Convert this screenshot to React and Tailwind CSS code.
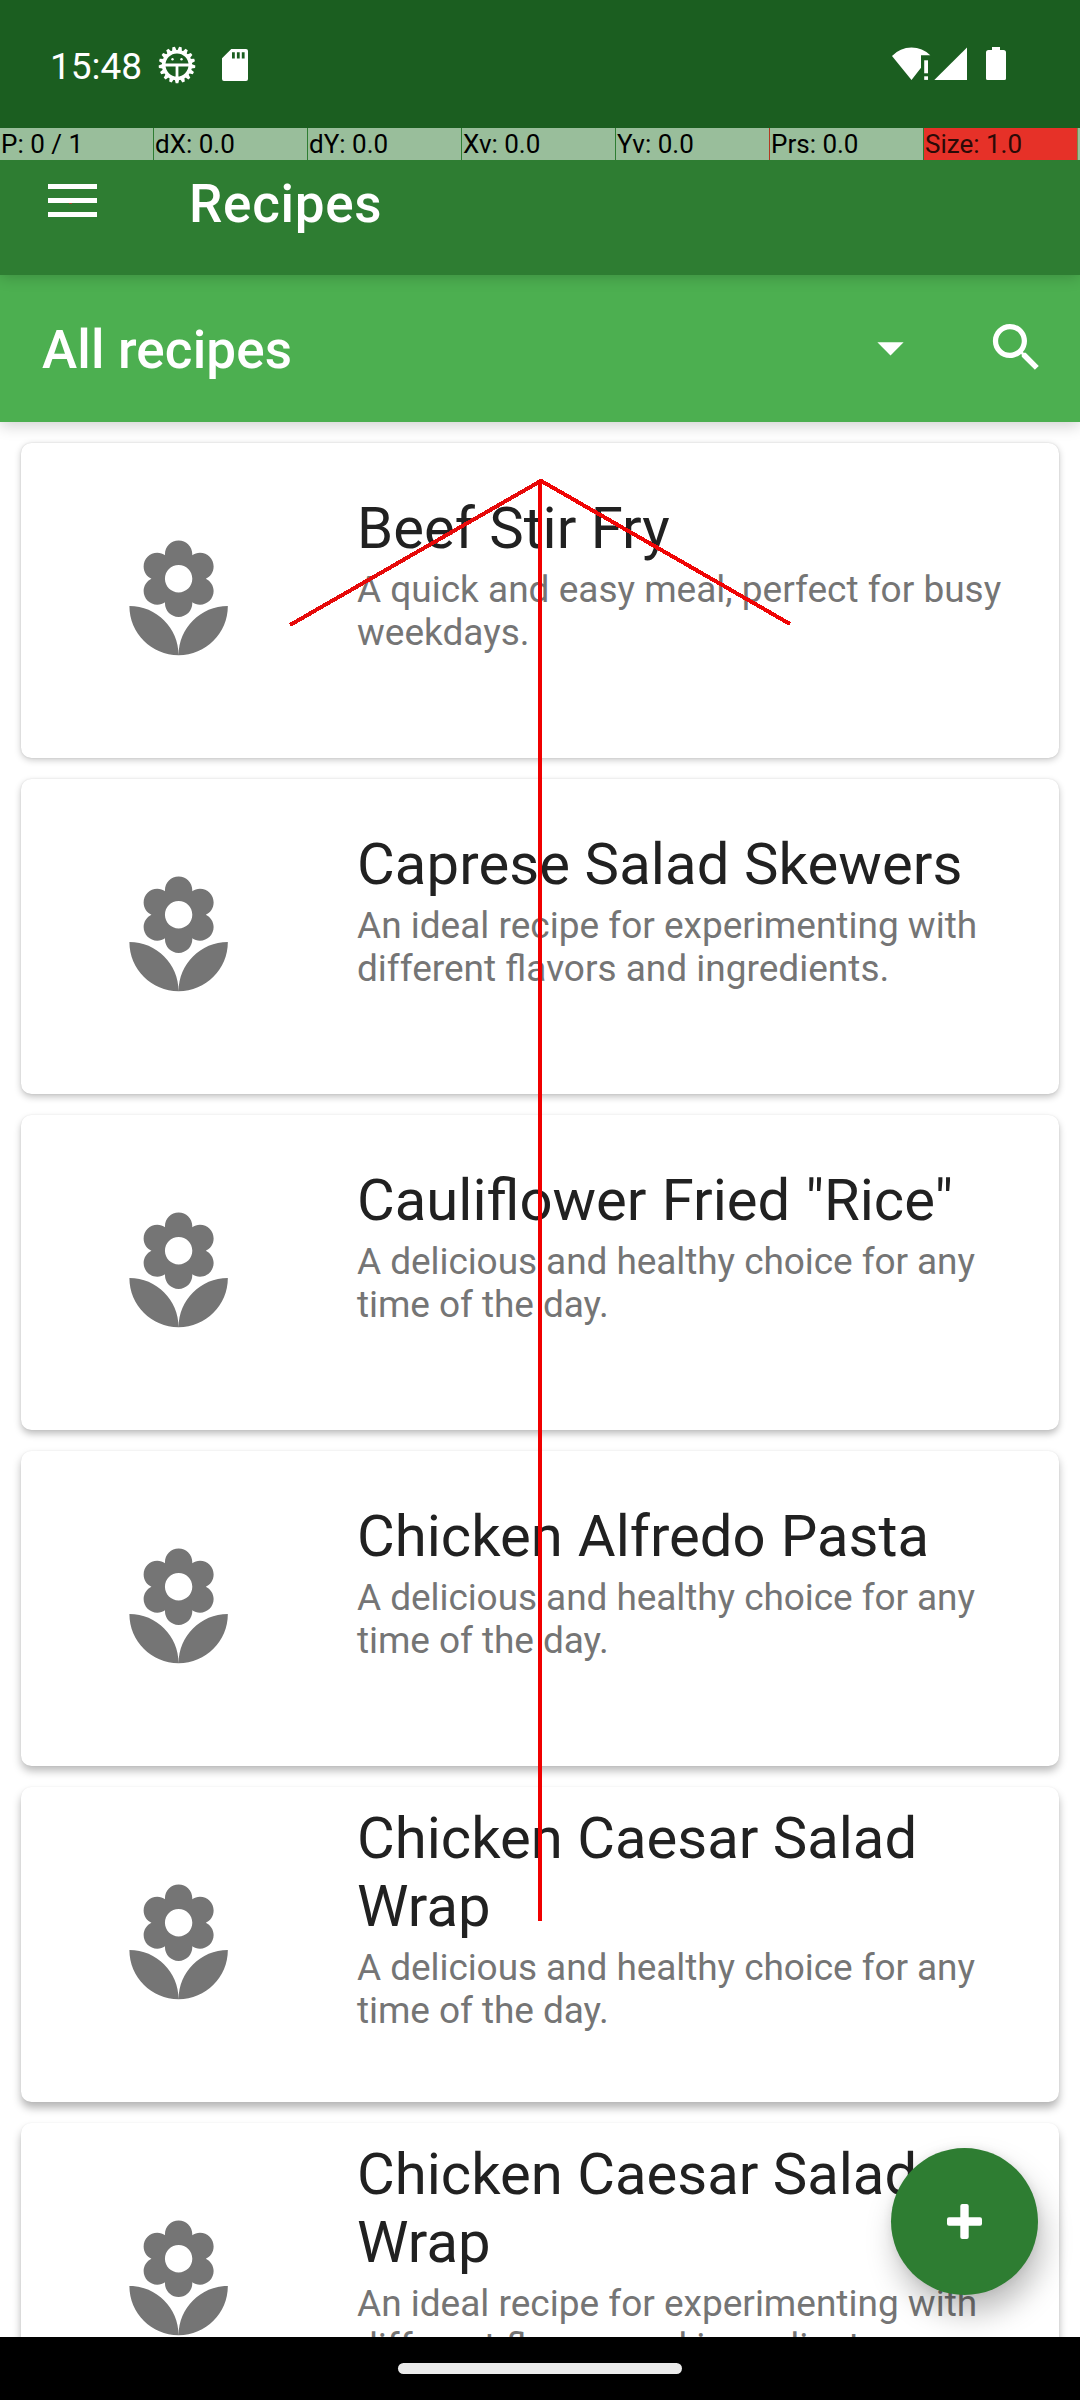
import React from 'react';

const DEBUG_CELLS = [
  { text: 'P: 0 / 1', cell: 'bg-[#99be9b] text-black', gap: 'bg-[#2e7d32]' },
  { text: 'dX: 0.0', cell: 'bg-[#99be9b] text-black', gap: 'bg-[#2e7d32]' },
  { text: 'dY: 0.0', cell: 'bg-[#99be9b] text-black', gap: 'bg-[#2e7d32]' },
  { text: 'Xv: 0.0', cell: 'bg-[#99be9b] text-black', gap: 'bg-[#2e7d32]' },
  { text: 'Yv: 0.0', cell: 'bg-[#99be9b] text-black', gap: 'bg-[#b23a22]' },
  { text: 'Prs: 0.0', cell: 'bg-[#99be9b] text-black', gap: 'bg-[#2e7d32]' },
  { text: 'Size: 1.0', cell: 'bg-[#e63128] text-[#2b0a07]', gap: 'bg-[#7a8a4c]' },
];

const DELICIOUS = 'A delicious and healthy choice for any time of the day.';
const IDEAL = 'An ideal recipe for experimenting with different flavors and ingredients.';

const RECIPES = [
  {
    title: 'Beef Stir Fry',
    text: 'A quick and easy meal, perfect for busy weekdays.',
    shadow: 'shadow-[0_2px_7px_rgba(0,0,0,0.22),0_0_2px_rgba(0,0,0,0.12)]',
  },
  {
    title: 'Caprese Salad Skewers',
    titleSpacing: 'tracking-[0.1px]',
    text: IDEAL,
    shadow: 'shadow-[0_3px_7px_rgba(0,0,0,0.24),0_0_2px_rgba(0,0,0,0.1)]',
  },
  {
    title: 'Cauliflower Fried "Rice"',
    titleSpacing: '[word-spacing:0.8px]',
    text: DELICIOUS,
    textSpacing: 'tracking-[-0.07px]',
    shadow: 'shadow-[0_4px_7px_rgba(0,0,0,0.25),0_0_2px_rgba(0,0,0,0.08)]',
  },
  {
    title: 'Chicken Alfredo Pasta',
    titleSpacing: '[word-spacing:0.7px]',
    text: DELICIOUS,
    textSpacing: 'tracking-[-0.07px]',
    shadow: 'shadow-[0_5px_8px_rgba(0,0,0,0.27),0_0_2px_rgba(0,0,0,0.07)]',
  },
  {
    title: 'Chicken Caesar Salad Wrap',
    text: DELICIOUS,
    textSpacing: 'tracking-[-0.07px]',
    shadow: 'shadow-[0_6px_9px_rgba(0,0,0,0.29),0_0_2px_rgba(0,0,0,0.06)]',
  },
  {
    title: 'Chicken Caesar Salad Wrap',
    text: IDEAL,
    shadow: 'shadow-[0_6px_9px_rgba(0,0,0,0.29),0_0_2px_rgba(0,0,0,0.06)]',
  },
];

const TEETH = Array.from({ length: 17 }, (_, i) => 180 + (i * 360) / 17);

function BugIcon() {
  return (
    <svg className="block h-[38px] w-[38px]" viewBox="-19 -19 38 38">
      {TEETH.map((a) => (
        <path key={a} d="M-2.6 -13 L-1.300 -18.300 H1.300 L2.600 -13 Z" fill="#fff" transform={`rotate(${a})`} />
      ))}
      <circle r="13.3" fill="none" stroke="#fff" strokeWidth="3.6" />
      <path d="M-12 0 H12 M0 0 V13" stroke="#fff" strokeWidth="2.8" />
      <circle cx="-4.5" cy="-5.8" r="1.2" fill="#fff" />
      <circle cx="4.5" cy="-5.8" r="1.2" fill="#fff" />
    </svg>
  );
}

function SdCardIcon() {
  return (
    <svg className="block h-8 w-[26px]" viewBox="0 0 26 32">
      <path
        fill="#fff"
        fillRule="evenodd"
        d="M9.3 0 H24 Q26 0 26 2 V30 Q26 32 24 32 H2 Q0 32 0 30 V9.3 Z M10 3.2 V9.6 H12.8 V3.2 Z M14.9 3.2 V9.6 H17.7 V3.2 Z M19.8 3.2 V9.6 H22.6 V3.2 Z"
      />
    </svg>
  );
}

function StatusIcons() {
  return (
    <svg className="block h-[34px] w-[116px]" viewBox="891 47 116 34" fill="#fff">
      <path d="M892 56 Q900 47.5 911.5 47.5 Q922.5 47.5 930.3 55.3 H921 V67.8 L911.5 80 Z" />
      <rect x="924.2" y="60.3" width="3.8" height="13" />
      <rect x="924.2" y="76.3" width="3.8" height="3.6" />
      <path d="M967 47.5 V80 H934.3 Z" />
      <path d="M992 47 H1000 V50 H1003.5 Q1006 50 1006 52.5 V78.5 Q1006 80 1004.5 80 H987.5 Q986 80 986 78.5 V52.5 Q986 50 988.5 50 H992 Z" />
    </svg>
  );
}

function FloristIcon() {
  return (
    <svg className="block h-[131.25px] w-[131.25px]" viewBox="0 0 24 24" fill="#757575">
      <path d="M12 22c4.97 0 9-4.03 9-9-4.97 0-9 4.03-9 9zM5.6 10.25c0 1.38 1.12 2.5 2.5 2.5.53 0 1.01-.16 1.42-.44l-.02.19c0 1.38 1.12 2.5 2.5 2.5s2.5-1.12 2.5-2.5l-.02-.19c.4.28.89.44 1.42.44 1.38 0 2.5-1.12 2.5-2.5 0-1-.59-1.85-1.43-2.25.84-.4 1.43-1.25 1.43-2.25 0-1.38-1.12-2.5-2.5-2.5-.53 0-1.01.16-1.42.44l.02-.19C14.500 2.120 13.380 1 12 1S9.500 2.120 9.500 3.500l.02.19c-.4-.28-.89-.44-1.42-.44-1.38 0-2.500 1.120-2.500 2.500 0 1 .59 1.850 1.430 2.250-.84.4-1.430 1.250-1.430 2.250zM12 5.500c1.380 0 2.500 1.120 2.500 2.500s-1.120 2.500-2.500 2.500S9.500 9.380 9.500 8s1.120-2.500 2.500-2.500zM3 13c0 4.970 4.030 9 9 9 0-4.970-4.030-9-9-9z" />
    </svg>
  );
}

function RecipeCard({ title, text, shadow, titleSpacing = '', textSpacing = '' }) {
  return (
    <article className={`flex h-[315px] shrink-0 rounded-[10.5px] bg-white ${shadow}`}>
      <div className="flex w-[315px] shrink-0 items-center justify-center">
        <FloristIcon />
      </div>
      <div className="flex min-w-0 flex-1 flex-col justify-center pr-[42px] pb-[53px] pl-[21px]">
        <h2 className={`text-[58px] leading-[68px] font-normal text-[#212121] ${titleSpacing}`}>{title}</h2>
        <p className={`mt-1.5 text-[37px] leading-[43px] text-[#757575] ${textSpacing}`}>{text}</p>
      </div>
    </article>
  );
}

function GestureTrace() {
  return (
    <svg
      className="pointer-events-none absolute inset-0 z-40 h-[2400px] w-[1080px]"
      viewBox="0 0 1080 2400"
      fill="none"
      strokeWidth="4"
      shapeRendering="crispEdges"
    >
      <path d="M541.500 480.500 L290 625" stroke="#e60a0a" />
      <path d="M540.500 480.500 L790 624" stroke="#f00505" />
      <path d="M540 480 V1921" stroke="#f00000" />
      <rect x="69" y="203" width="3" height="1" fill="#a8402a" />
    </svg>
  );
}

export default function App() {
  return (
    <div className="relative flex h-[2400px] w-[1080px] flex-col overflow-hidden bg-white font-[Roboto,sans-serif]">
      <header className="relative z-30 flex h-[128px] shrink-0 items-start justify-between bg-[#1b5e20] pr-[73px] pl-[50px]">
        <div className="flex items-start">
          <span className="mt-[45px] w-[108px] text-[37px] leading-[43px] whitespace-nowrap text-white">15:48</span>
          <div className="mt-[46px]">
            <BugIcon />
          </div>
          <div className="mt-[49px] ml-[26px]">
            <SdCardIcon />
          </div>
        </div>
        <div className="mt-[47px]">
          <StatusIcons />
        </div>
      </header>

      <div className="relative z-30 flex h-8 shrink-0 bg-[#99be9b]">
        {DEBUG_CELLS.map((c) => (
          <div key={c.text} className="flex w-[154px] shrink-0">
            <div className={`w-[153px] pt-px pl-px text-[26px] leading-[30px] whitespace-nowrap ${c.cell}`}>{c.text}</div>
            <div className={`w-px ${c.gap}`} />
          </div>
        ))}
      </div>

      <div className="relative z-20 flex h-[115px] shrink-0 items-start bg-[#2e7d32] pl-12 shadow-[0_2px_14px_rgba(0,0,0,0.2)]">
        <button className="mt-6 flex w-[49px] flex-col gap-[9px]" aria-label="Menu">
          <span className="h-[5px] bg-white" />
          <span className="h-[5px] bg-white" />
          <span className="h-[5px] bg-white" />
        </button>
        <h1 className="mt-[13px] ml-[92px] text-[53px] leading-[62px] font-medium tracking-[0.7px] text-white">Recipes</h1>
      </div>

      <div className="relative z-10 flex h-[147px] shrink-0 items-start bg-[#4caf50] pr-8 pl-[42px] shadow-[0_4px_14px_rgba(0,0,0,0.18)]">
        <span className="mt-[44px] flex-1 text-[53px] leading-[62px] font-medium tracking-[0.15px] text-white">All recipes</span>
        <svg className="mt-[41px] block h-[63px] w-[63px]" viewBox="0 0 24 24" fill="#fff">
          <path d="M7 10l5 5 5-5z" />
        </svg>
        <svg className="mt-[41px] ml-[63px] block h-[63px] w-[63px]" viewBox="0 0 24 24" fill="#fff">
          <path d="M15.5 14h-.79l-.28-.27C15.41 12.59 16 11.110 16 9.500 16 5.910 13.090 3 9.500 3S3 5.910 3 9.500 5.910 16 9.500 16c1.610 0 3.090-.59 4.230-1.570l.27.28v.79l5 4.990L20.490 19l-4.990-5zm-6 0C7.010 14 5 11.990 5 9.500S7.010 5 9.500 5 14 7.010 14 9.500 11.990 14 9.500 14z" />
        </svg>
      </div>

      <main className="flex h-[1915px] shrink-0 flex-col gap-[21px] overflow-hidden px-[21px] pt-[21px]">
        {RECIPES.map((r, i) => (
          <RecipeCard key={i} {...r} />
        ))}
      </main>

      <button
        aria-label="Add recipe"
        className="absolute top-[2148px] left-[891px] z-10 flex h-[147px] w-[147px] items-center justify-center rounded-full bg-[#2e7d32] shadow-[5px_18px_30px_rgba(0,0,0,0.26),0_0_10px_rgba(0,0,0,0.08)]"
      >
        <svg className="block h-[35px] w-[35px]" viewBox="0 0 35 35" fill="#fff">
          <rect x="13.300" y="0" width="8.400" height="35" rx="2" />
          <rect x="0" y="13.300" width="35" height="8.400" rx="2" />
        </svg>
      </button>

      <footer className="relative z-20 flex h-[63px] shrink-0 justify-center bg-black">
        <div className="mt-[26px] h-[11px] w-[284px] rounded-full bg-[#ebebeb]" />
      </footer>

      <GestureTrace />
    </div>
  );
}
